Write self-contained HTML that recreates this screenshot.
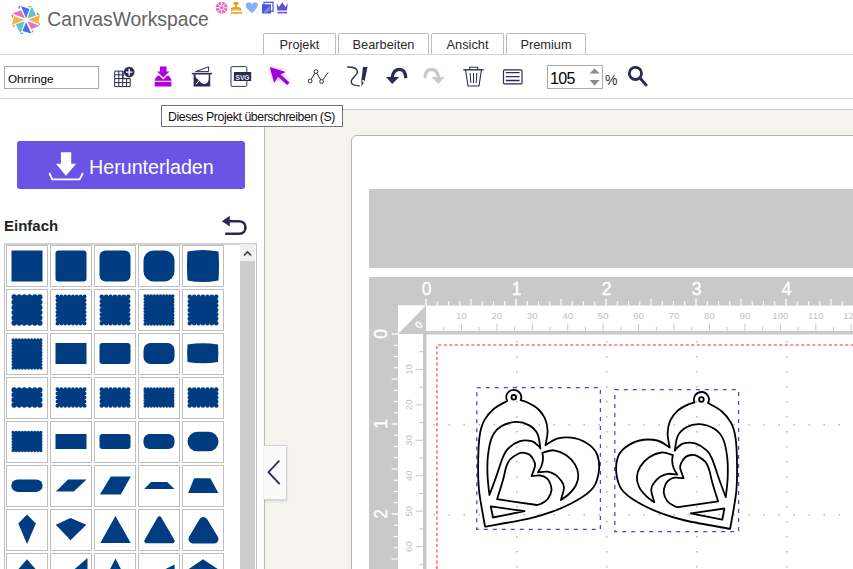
<!DOCTYPE html><html><head><meta charset="utf-8"><style>
*{margin:0;padding:0;box-sizing:border-box}
html,body{width:853px;height:569px;overflow:hidden;background:#fff;font-family:"Liberation Sans",sans-serif;position:relative}
.a{position:absolute}
.tab{position:absolute;top:33px;height:21px;border:1px solid #bdbdbd;border-radius:2px 2px 0 0;border-bottom:none;background:#fff;font-size:12.8px;color:#2a2a2a;text-align:center;line-height:22px}
.cell{position:absolute;width:42px;height:42px;border:1px solid #bebebe;background:#fff}
.cell svg{position:absolute;left:-1px;top:-1px}
</style></head><body>
<svg class="a" style="left:0;top:0" width="50" height="40">
<polygon fill="#4f6ee8" points="20.9,6 29.6,9 26,18.3"/>
<polygon fill="#5cc4d8" points="31.7,6.3 36.1,15.6 27.2,18.6"/>
<polygon fill="#f5b345" points="40,15 38.2,23.7 28.1,19.5"/>
<polygon fill="#e274c4" points="39.4,25.8 31.4,29.3 27.2,21"/>
<polygon fill="#4f6ee8" points="31.4,33.5 22.4,31.1 26,22.2"/>
<polygon fill="#5cc4d8" points="20.6,33.5 15.8,24.3 24.5,21.3"/>
<polygon fill="#f5b345" points="11.9,24.9 14,15.9 24.2,20.1"/>
<polygon fill="#e274c4" points="12.2,13.5 20.9,10.2 25.1,18.6"/>
<polygon fill="#3a4fc0" points="18.3,6.6 20.2,6.3 18.9,9.4"/>
<polygon fill="#3a9fb0" points="28,6.1 30.8,5.9 29.8,7.8"/>
<polygon fill="#e08a30" points="36.6,12.2 39.8,14.2 37.2,15.2"/>
<polygon fill="#b04ca0" points="38.6,21.9 40.2,24.9 38.7,24.4"/>
<polygon fill="#3a4fc0" points="31.6,33.2 33.6,30.4 32.4,30.8"/>
<polygon fill="#3a9fb0" points="20.3,33.9 23.1,32 22.7,33.9"/>
<polygon fill="#e08a30" points="12.4,25.4 15.4,25.2 14.1,27.6"/>
<polygon fill="#b04ca0" points="11.5,15.2 13.3,14.5 12.5,18.2"/>
</svg>
<div class="a" style="left:47.3px;top:9.2px;font-size:19.3px;color:#636363;letter-spacing:0px;white-space:nowrap">CanvasWorkspace</div>
<svg class="a" style="left:212px;top:0" width="80" height="16">
<g transform="translate(9.7,7.7)"><circle r="6" fill="#f068c4"/>
<g stroke="#fff" stroke-width="0.9" fill="none"><circle r="2.2"/><path d="M0,-6V-2.2M0,6V2.2M-6,0H-2.2M6,0H2.2M-4.2,-4.2L-1.6,-1.6M4.2,4.2L1.6,1.6M-4.2,4.2L-1.6,1.6M4.2,-4.2L1.6,-1.6"/></g></g>
<g fill="#e8a020"><rect x="21.5" y="2" width="5" height="3" rx="1"/><rect x="23" y="4.5" width="2" height="3"/><path d="M19,8 L21.5,7 H26.5 L29,8 V11 H19Z"/><rect x="19" y="12" width="11" height="1.6"/></g>
<g fill="none" stroke="#fff" stroke-width="0.8"><path d="M20.5,10.2H27.5"/></g>
<path d="M39.9,13 C36,10 33.8,8 33.8,5.3 C33.8,3.3 35.3,2.3 36.8,2.3 C38.2,2.3 39.3,3.2 39.9,4.3 C40.5,3.2 41.6,2.3 43,2.3 C44.5,2.3 45.9,3.3 45.9,5.3 C45.9,8 43.8,10 39.9,13Z" fill="#82b2f2"/>
<path d="M43,12 L45.5,6" stroke="#fff" stroke-width="0.7" opacity="0.7"/>
<rect x="52" y="2.3" width="9" height="9" fill="none" stroke="#4050e0" stroke-width="1.2"/>
<rect x="50" y="4.3" width="9" height="9.2" fill="#4a56e4"/>
<path d="M52,12.5 L58,6.5 M54,12.5 L58,8.5" stroke="#fff" stroke-width="0.6"/>
<path d="M64.5,3 L66.8,7 L70.2,2.5 L73.6,7 L75.8,3 L75,10.5 H65.4Z" fill="#6050d8"/>
<rect x="65.4" y="11.8" width="9.6" height="1.6" fill="#6050d8"/>
</svg>
<div class="a" style="left:0;top:54px;width:853px;height:1px;background:#d4d4d4"></div>
<div class="tab" style="left:263px;width:73px">Projekt</div>
<div class="tab" style="left:338px;width:91px">Bearbeiten</div>
<div class="tab" style="left:431px;width:73px">Ansicht</div>
<div class="tab" style="left:506px;width:80px">Premium</div>
<div class="a" style="left:4px;top:66px;width:95px;height:23px;border:1px solid #a9a9a9;font-size:11.7px;color:#000;padding-left:3px;line-height:24px">Ohrringe</div>
<div class="a" style="left:0;top:98px;width:853px;height:1px;background:#d0d0d0"></div>
<svg class="a" style="left:100px;top:56px" width="560" height="40">
<g transform="translate(-100,-56)">
<!-- grid plus -->
<g fill="none" stroke="#2b2b52" stroke-width="1">
<path d="M114.7,71.1 H123.2 V78.6 H130.2 V86.6 H114.7Z M118.8,71.1 V86.6 M122.7,71.1 V86.6 M126.6,78.6 V86.6 M114.7,74.8 H123 M114.7,78.6 H130 M114.7,82.6 H130"/>
</g>
<circle cx="129.2" cy="72.1" r="5.3" fill="#2b2b52"/>
<path d="M129.2,68.8 V75.4 M125.9,72.1 H132.5" stroke="#fff" stroke-width="1.4"/>
<!-- download tray magenta -->
<g fill="#b000e0">
<path d="M160,66.5 H166.5 V71.5 H169.5 L163.25,77.5 L157,71.5 H160Z"/>
<path d="M154.7,79.5 L157.5,75.8 H159.5 L163.25,79.5 L167,75.8 H169 L171.4,79.5 V86.6 H154.7Z"/>
</g>
<path d="M154.7,81.3 H171.4" stroke="#fff" stroke-width="1"/>
<!-- scan icon -->
<path d="M195.5,71.6 L208.6,66.8 V71.6Z" fill="none" stroke="#2b2b52" stroke-width="1"/>
<path d="M191.8,73.6 H212" stroke="#2b2b52" stroke-width="1.5"/>
<path d="M193.6,74.3 H210.2 V86.5 H193.6Z M195.5,74.5 H208.7 V79 C208.7,82 206.5,84 204,84 C202.5,84 201.2,83 200.2,81.8 L195.8,77.5Z" fill="#2b2b52" fill-rule="evenodd"/><path d="M196.2,84.2 L199.8,79.8" stroke="#fff" stroke-width="1"/>
<!-- svg file -->
<rect x="231" y="66.6" width="15.8" height="19.8" rx="1" fill="none" stroke="#2b2b52" stroke-width="0.95"/>
<rect x="233.9" y="72" width="17.3" height="9" fill="#2b2b52"/>
<text x="242.5" y="79.6" font-size="8" font-weight="bold" textLength="14" lengthAdjust="spacingAndGlyphs" fill="#e8e8f0" text-anchor="middle" font-family="Liberation Sans">SVG</text>
<!-- arrow magenta -->
<defs><filter id="gl" x="-50%" y="-50%" width="200%" height="200%"><feGaussianBlur stdDeviation="2"/></filter></defs>
<g filter="url(#gl)" opacity="0.35"><path d="M269.7,67 L285.7,71.9 L280.5,74.5 L289.5,82.6 L287.2,85 L278,76.8 L274.2,83Z" fill="#b000e8"/></g>
<path d="M269.7,67 L285.7,71.9 L280.5,74.5 L289.5,82.6 L287.2,85 L278,76.8 L274.2,83Z" fill="#a000e0"/>
<!-- node icon -->
<path d="M310.1,81 L315.9,71.6 L321.6,81.5 L328.1,72.5" fill="none" stroke="#2b2b52" stroke-width="1"/>
<g fill="#fff" stroke="#2b2b52" stroke-width="1"><circle cx="310.1" cy="81" r="1.9"/><circle cx="315.9" cy="71.6" r="1.9"/><circle cx="321.6" cy="81.5" r="1.9"/></g>
<!-- pen S -->
<path d="M347.3,67 C352,67 357.4,68 357.4,71.8 C357.4,75.5 351.2,78 351.2,81.8 C351.2,85.2 355,85.8 359.7,85.8" fill="none" stroke="#2b2b52" stroke-width="1.3"/>
<path d="M363,67 H367.5 L364.8,80.2 L361.6,86.4 L361.4,80Z" fill="#2b2b52"/>
<path d="M362,80.3 L364.5,80.3 L363,83Z" fill="#fff"/>
<!-- undo -->
<path d="M392.2,77.2 C393,72 396,69.3 399.5,69.3 C403,69.3 405.5,72.5 405.8,78.2" fill="none" stroke="#2b2b52" stroke-width="3.2"/>
<path d="M386.1,77 H399.2 L392.2,84Z" fill="#2b2b52"/>
<!-- redo -->
<g transform="translate(830.7,0) scale(-1,1)">
<path d="M392.2,77.2 C393,72 396,69.3 399.5,69.3 C403,69.3 405.5,72.5 405.8,78.2" fill="none" stroke="#c6cad2" stroke-width="3.2"/>
<path d="M386.1,77 H399.2 L392.2,84Z" fill="#c6cad2"/>
</g>
<!-- trash -->
<path d="M463.3,69.8 H483.6" stroke="#2b2b52" stroke-width="1.4"/>
<path d="M469.8,69.5 V67.2 H477.7 V69.5" fill="none" stroke="#2b2b52" stroke-width="1.1"/>
<path d="M465.6,70 L468,86 H479 L481.4,70" fill="none" stroke="#2b2b52" stroke-width="1.1"/>
<path d="M470.2,73 L470.8,83 M473.5,73 V83 M476.8,73 L476.2,83" stroke="#2b2b52" stroke-width="1"/>
<!-- list -->
<rect x="503.5" y="69.8" width="18.5" height="14" rx="1" fill="none" stroke="#2b2b52" stroke-width="1.2"/>
<path d="M505.8,72.6 H519.6 M505.8,76.6 H519.6 M505.8,80.5 H519.6" stroke="#2b2b52" stroke-width="1.3"/>
<!-- magnifier -->
<circle cx="635.4" cy="73.4" r="6.1" fill="none" stroke="#2b2b52" stroke-width="2.8"/>
<path d="M640,78 L646.8,85.8" stroke="#2b2b52" stroke-width="2.8"/>
</g></svg>
<div class="a" style="left:547px;top:65px;width:56px;height:24px;border:1px solid #a9a9a9;background:#fff"></div>
<div class="a" style="left:550px;top:70px;font-size:16px;letter-spacing:-0.6px;color:#000;line-height:18px">105</div>
<svg class="a" style="left:588px;top:66px" width="14" height="22"><path d="M1.5,7.5 L6.6,2.5 L11.7,7.5Z M1.5,14 L6.6,19.5 L11.7,14Z" fill="#8a8a8a"/></svg>
<div class="a" style="left:605px;top:72px;font-size:14px;color:#333;line-height:16px">%</div>
<div class="a" style="left:264px;top:109px;width:1px;height:460px;background:#b8b8b8"></div>
<div class="a" style="left:17px;top:141px;width:228px;height:48px;background:#6b53e6;border-radius:3px"></div>
<svg class="a" style="left:45px;top:148px" width="45" height="36"><g transform="translate(-45,-148)">
<path d="M60.9,152.2 H71.2 V163.8 H76.1 L66,175.8 L55.9,163.8 H60.9Z" fill="#fff"/>
<path d="M49.3,173 L52.3,179.3 H79.6 L82.9,173" fill="none" stroke="#fff" stroke-width="1.8"/>
</g></svg>
<div class="a" style="left:89px;top:154.5px;font-size:19.7px;color:#fff;line-height:24px;white-space:nowrap">Herunterladen</div>
<div class="a" style="left:4px;top:217px;font-size:15px;font-weight:bold;color:#222;line-height:18px">Einfach</div>
<svg class="a" style="left:218px;top:212px" width="32" height="26"><g transform="translate(-218,-212)">
<path d="M228,221.2 H238.5 C243,221.2 245.5,224 245.5,227.5 C245.5,231 243,233.8 238.5,233.8 H225.2" fill="none" stroke="#2b2b52" stroke-width="2.6"/>
<path d="M221.9,221.2 L229.8,215.8 V226.6Z" fill="#2b2b52"/>
</g></svg>
<div class="a" style="left:4px;top:243px;width:253px;height:340px;border:1px solid #c0c0c0;border-top:2px solid #d2d2d2;background:#fff"></div>
<div class="a" style="left:240px;top:244px;width:15px;height:330px;background:#cdcdcd"></div>
<div class="a" style="left:240px;top:244px;width:15px;height:17px;background:#f0f0f0"></div>
<svg class="a" style="left:240px;top:244px" width="15" height="17"><path d="M4,11.5 L7.5,8 L11,11.5" fill="none" stroke="#404040" stroke-width="1.6"/></svg>
<div class="cell" style="left:6px;top:245px"><svg width="42" height="42"><rect x="5.5" y="5.5" width="31" height="31" rx="0" fill="#003c82"/></svg></div>
<div class="cell" style="left:50px;top:245px"><svg width="42" height="42"><rect x="5.5" y="5.5" width="31" height="31" rx="3" fill="#003c82"/></svg></div>
<div class="cell" style="left:94px;top:245px"><svg width="42" height="42"><rect x="5.5" y="5.5" width="31" height="31" rx="6" fill="#003c82"/></svg></div>
<div class="cell" style="left:138px;top:245px"><svg width="42" height="42"><rect x="5.5" y="5.5" width="31" height="31" rx="10" fill="#003c82"/></svg></div>
<div class="cell" style="left:182px;top:245px"><svg width="42" height="42"><path fill="#003c82" d="M5.5,6.5 Q21.0,3.5 36.5,6.5 Q37.5,21.0 36.5,35.5 Q21.0,38.5 5.5,35.5 Q4.5,21.0 5.5,6.5Z"/></svg></div>
<div class="cell" style="left:6px;top:289px"><svg width="42" height="42"><path fill="#003c82" d="M8.12,8.12h25.77v25.77h-25.77ZM5.50,8.12a2.62,2.62 0 1 1 5.23,0a2.62,2.62 0 1 1 -5.23,0M5.50,13.27a2.62,2.62 0 1 1 5.23,0a2.62,2.62 0 1 1 -5.23,0M5.50,18.42a2.62,2.62 0 1 1 5.23,0a2.62,2.62 0 1 1 -5.23,0M5.50,23.58a2.62,2.62 0 1 1 5.23,0a2.62,2.62 0 1 1 -5.23,0M5.50,28.73a2.62,2.62 0 1 1 5.23,0a2.62,2.62 0 1 1 -5.23,0M5.50,33.88a2.62,2.62 0 1 1 5.23,0a2.62,2.62 0 1 1 -5.23,0M10.65,8.12a2.62,2.62 0 1 1 5.23,0a2.62,2.62 0 1 1 -5.23,0M10.65,33.88a2.62,2.62 0 1 1 5.23,0a2.62,2.62 0 1 1 -5.23,0M15.80,8.12a2.62,2.62 0 1 1 5.23,0a2.62,2.62 0 1 1 -5.23,0M15.80,33.88a2.62,2.62 0 1 1 5.23,0a2.62,2.62 0 1 1 -5.23,0M20.96,8.12a2.62,2.62 0 1 1 5.23,0a2.62,2.62 0 1 1 -5.23,0M20.96,33.88a2.62,2.62 0 1 1 5.23,0a2.62,2.62 0 1 1 -5.23,0M26.11,8.12a2.62,2.62 0 1 1 5.23,0a2.62,2.62 0 1 1 -5.23,0M26.11,33.88a2.62,2.62 0 1 1 5.23,0a2.62,2.62 0 1 1 -5.23,0M31.26,8.12a2.62,2.62 0 1 1 5.23,0a2.62,2.62 0 1 1 -5.23,0M31.26,13.27a2.62,2.62 0 1 1 5.23,0a2.62,2.62 0 1 1 -5.23,0M31.26,18.42a2.62,2.62 0 1 1 5.23,0a2.62,2.62 0 1 1 -5.23,0M31.26,23.58a2.62,2.62 0 1 1 5.23,0a2.62,2.62 0 1 1 -5.23,0M31.26,28.73a2.62,2.62 0 1 1 5.23,0a2.62,2.62 0 1 1 -5.23,0M31.26,33.88a2.62,2.62 0 1 1 5.23,0a2.62,2.62 0 1 1 -5.23,0"/></svg></div>
<div class="cell" style="left:50px;top:289px"><svg width="42" height="42"><path fill="#003c82" d="M7.46,7.46h27.07v27.07h-27.07ZM5.50,7.46a1.96,1.96 0 1 1 3.93,0a1.96,1.96 0 1 1 -3.93,0M5.50,11.33a1.96,1.96 0 1 1 3.93,0a1.96,1.96 0 1 1 -3.93,0M5.50,15.20a1.96,1.96 0 1 1 3.93,0a1.96,1.96 0 1 1 -3.93,0M5.50,19.07a1.96,1.96 0 1 1 3.93,0a1.96,1.96 0 1 1 -3.93,0M5.50,22.93a1.96,1.96 0 1 1 3.93,0a1.96,1.96 0 1 1 -3.93,0M5.50,26.80a1.96,1.96 0 1 1 3.93,0a1.96,1.96 0 1 1 -3.93,0M5.50,30.67a1.96,1.96 0 1 1 3.93,0a1.96,1.96 0 1 1 -3.93,0M5.50,34.54a1.96,1.96 0 1 1 3.93,0a1.96,1.96 0 1 1 -3.93,0M9.37,7.46a1.96,1.96 0 1 1 3.93,0a1.96,1.96 0 1 1 -3.93,0M9.37,34.54a1.96,1.96 0 1 1 3.93,0a1.96,1.96 0 1 1 -3.93,0M13.24,7.46a1.96,1.96 0 1 1 3.93,0a1.96,1.96 0 1 1 -3.93,0M13.24,34.54a1.96,1.96 0 1 1 3.93,0a1.96,1.96 0 1 1 -3.93,0M17.11,7.46a1.96,1.96 0 1 1 3.93,0a1.96,1.96 0 1 1 -3.93,0M17.11,34.54a1.96,1.96 0 1 1 3.93,0a1.96,1.96 0 1 1 -3.93,0M20.97,7.46a1.96,1.96 0 1 1 3.93,0a1.96,1.96 0 1 1 -3.93,0M20.97,34.54a1.96,1.96 0 1 1 3.93,0a1.96,1.96 0 1 1 -3.93,0M24.84,7.46a1.96,1.96 0 1 1 3.93,0a1.96,1.96 0 1 1 -3.93,0M24.84,34.54a1.96,1.96 0 1 1 3.93,0a1.96,1.96 0 1 1 -3.93,0M28.71,7.46a1.96,1.96 0 1 1 3.93,0a1.96,1.96 0 1 1 -3.93,0M28.71,34.54a1.96,1.96 0 1 1 3.93,0a1.96,1.96 0 1 1 -3.93,0M32.58,7.46a1.96,1.96 0 1 1 3.93,0a1.96,1.96 0 1 1 -3.93,0M32.58,11.33a1.96,1.96 0 1 1 3.93,0a1.96,1.96 0 1 1 -3.93,0M32.58,15.20a1.96,1.96 0 1 1 3.93,0a1.96,1.96 0 1 1 -3.93,0M32.58,19.07a1.96,1.96 0 1 1 3.93,0a1.96,1.96 0 1 1 -3.93,0M32.58,22.93a1.96,1.96 0 1 1 3.93,0a1.96,1.96 0 1 1 -3.93,0M32.58,26.80a1.96,1.96 0 1 1 3.93,0a1.96,1.96 0 1 1 -3.93,0M32.58,30.67a1.96,1.96 0 1 1 3.93,0a1.96,1.96 0 1 1 -3.93,0M32.58,34.54a1.96,1.96 0 1 1 3.93,0a1.96,1.96 0 1 1 -3.93,0"/></svg></div>
<div class="cell" style="left:94px;top:289px"><svg width="42" height="42"><path fill="#003c82" d="M7.76,7.76h26.47v26.47h-26.47ZM5.50,7.76a2.26,2.26 0 1 1 4.53,0a2.26,2.26 0 1 1 -4.53,0M5.50,12.18a2.26,2.26 0 1 1 4.53,0a2.26,2.26 0 1 1 -4.53,0M5.50,16.59a2.26,2.26 0 1 1 4.53,0a2.26,2.26 0 1 1 -4.53,0M5.50,21.00a2.26,2.26 0 1 1 4.53,0a2.26,2.26 0 1 1 -4.53,0M5.50,25.41a2.26,2.26 0 1 1 4.53,0a2.26,2.26 0 1 1 -4.53,0M5.50,29.82a2.26,2.26 0 1 1 4.53,0a2.26,2.26 0 1 1 -4.53,0M5.50,34.24a2.26,2.26 0 1 1 4.53,0a2.26,2.26 0 1 1 -4.53,0M9.92,7.76a2.26,2.26 0 1 1 4.53,0a2.26,2.26 0 1 1 -4.53,0M9.92,34.24a2.26,2.26 0 1 1 4.53,0a2.26,2.26 0 1 1 -4.53,0M14.33,7.76a2.26,2.26 0 1 1 4.53,0a2.26,2.26 0 1 1 -4.53,0M14.33,34.24a2.26,2.26 0 1 1 4.53,0a2.26,2.26 0 1 1 -4.53,0M18.74,7.76a2.26,2.26 0 1 1 4.53,0a2.26,2.26 0 1 1 -4.53,0M18.74,34.24a2.26,2.26 0 1 1 4.53,0a2.26,2.26 0 1 1 -4.53,0M23.15,7.76a2.26,2.26 0 1 1 4.53,0a2.26,2.26 0 1 1 -4.53,0M23.15,34.24a2.26,2.26 0 1 1 4.53,0a2.26,2.26 0 1 1 -4.53,0M27.56,7.76a2.26,2.26 0 1 1 4.53,0a2.26,2.26 0 1 1 -4.53,0M27.56,34.24a2.26,2.26 0 1 1 4.53,0a2.26,2.26 0 1 1 -4.53,0M31.98,7.76a2.26,2.26 0 1 1 4.53,0a2.26,2.26 0 1 1 -4.53,0M31.98,12.18a2.26,2.26 0 1 1 4.53,0a2.26,2.26 0 1 1 -4.53,0M31.98,16.59a2.26,2.26 0 1 1 4.53,0a2.26,2.26 0 1 1 -4.53,0M31.98,21.00a2.26,2.26 0 1 1 4.53,0a2.26,2.26 0 1 1 -4.53,0M31.98,25.41a2.26,2.26 0 1 1 4.53,0a2.26,2.26 0 1 1 -4.53,0M31.98,29.82a2.26,2.26 0 1 1 4.53,0a2.26,2.26 0 1 1 -4.53,0M31.98,34.24a2.26,2.26 0 1 1 4.53,0a2.26,2.26 0 1 1 -4.53,0"/></svg></div>
<div class="cell" style="left:138px;top:289px"><svg width="42" height="42"><path fill="#003c82" d="M7.09,7.09h27.83v27.83h-27.83ZM5.50,7.09a1.59,1.59 0 1 1 3.17,0a1.59,1.59 0 1 1 -3.17,0M5.50,10.18a1.59,1.59 0 1 1 3.17,0a1.59,1.59 0 1 1 -3.17,0M5.50,13.27a1.59,1.59 0 1 1 3.17,0a1.59,1.59 0 1 1 -3.17,0M5.50,16.36a1.59,1.59 0 1 1 3.17,0a1.59,1.59 0 1 1 -3.17,0M5.50,19.45a1.59,1.59 0 1 1 3.17,0a1.59,1.59 0 1 1 -3.17,0M5.50,22.55a1.59,1.59 0 1 1 3.17,0a1.59,1.59 0 1 1 -3.17,0M5.50,25.64a1.59,1.59 0 1 1 3.17,0a1.59,1.59 0 1 1 -3.17,0M5.50,28.73a1.59,1.59 0 1 1 3.17,0a1.59,1.59 0 1 1 -3.17,0M5.50,31.82a1.59,1.59 0 1 1 3.17,0a1.59,1.59 0 1 1 -3.17,0M5.50,34.91a1.59,1.59 0 1 1 3.17,0a1.59,1.59 0 1 1 -3.17,0M8.59,7.09a1.59,1.59 0 1 1 3.17,0a1.59,1.59 0 1 1 -3.17,0M8.59,34.91a1.59,1.59 0 1 1 3.17,0a1.59,1.59 0 1 1 -3.17,0M11.68,7.09a1.59,1.59 0 1 1 3.17,0a1.59,1.59 0 1 1 -3.17,0M11.68,34.91a1.59,1.59 0 1 1 3.17,0a1.59,1.59 0 1 1 -3.17,0M14.77,7.09a1.59,1.59 0 1 1 3.17,0a1.59,1.59 0 1 1 -3.17,0M14.77,34.91a1.59,1.59 0 1 1 3.17,0a1.59,1.59 0 1 1 -3.17,0M17.86,7.09a1.59,1.59 0 1 1 3.17,0a1.59,1.59 0 1 1 -3.17,0M17.86,34.91a1.59,1.59 0 1 1 3.17,0a1.59,1.59 0 1 1 -3.17,0M20.96,7.09a1.59,1.59 0 1 1 3.17,0a1.59,1.59 0 1 1 -3.17,0M20.96,34.91a1.59,1.59 0 1 1 3.17,0a1.59,1.59 0 1 1 -3.17,0M24.05,7.09a1.59,1.59 0 1 1 3.17,0a1.59,1.59 0 1 1 -3.17,0M24.05,34.91a1.59,1.59 0 1 1 3.17,0a1.59,1.59 0 1 1 -3.17,0M27.14,7.09a1.59,1.59 0 1 1 3.17,0a1.59,1.59 0 1 1 -3.17,0M27.14,34.91a1.59,1.59 0 1 1 3.17,0a1.59,1.59 0 1 1 -3.17,0M30.23,7.09a1.59,1.59 0 1 1 3.17,0a1.59,1.59 0 1 1 -3.17,0M30.23,34.91a1.59,1.59 0 1 1 3.17,0a1.59,1.59 0 1 1 -3.17,0M33.32,7.09a1.59,1.59 0 1 1 3.17,0a1.59,1.59 0 1 1 -3.17,0M33.32,10.18a1.59,1.59 0 1 1 3.17,0a1.59,1.59 0 1 1 -3.17,0M33.32,13.27a1.59,1.59 0 1 1 3.17,0a1.59,1.59 0 1 1 -3.17,0M33.32,16.36a1.59,1.59 0 1 1 3.17,0a1.59,1.59 0 1 1 -3.17,0M33.32,19.45a1.59,1.59 0 1 1 3.17,0a1.59,1.59 0 1 1 -3.17,0M33.32,22.55a1.59,1.59 0 1 1 3.17,0a1.59,1.59 0 1 1 -3.17,0M33.32,25.64a1.59,1.59 0 1 1 3.17,0a1.59,1.59 0 1 1 -3.17,0M33.32,28.73a1.59,1.59 0 1 1 3.17,0a1.59,1.59 0 1 1 -3.17,0M33.32,31.82a1.59,1.59 0 1 1 3.17,0a1.59,1.59 0 1 1 -3.17,0M33.32,34.91a1.59,1.59 0 1 1 3.17,0a1.59,1.59 0 1 1 -3.17,0"/></svg></div>
<div class="cell" style="left:182px;top:289px"><svg width="42" height="42"><path fill="#003c82" d="M7.74,7.74h26.51v26.51h-26.51ZM5.50,7.74a2.24,2.24 0 1 1 4.49,0a2.24,2.24 0 1 1 -4.49,0M5.50,12.16a2.24,2.24 0 1 1 4.49,0a2.24,2.24 0 1 1 -4.49,0M5.50,16.58a2.24,2.24 0 1 1 4.49,0a2.24,2.24 0 1 1 -4.49,0M5.50,21.00a2.24,2.24 0 1 1 4.49,0a2.24,2.24 0 1 1 -4.49,0M5.50,25.42a2.24,2.24 0 1 1 4.49,0a2.24,2.24 0 1 1 -4.49,0M5.50,29.84a2.24,2.24 0 1 1 4.49,0a2.24,2.24 0 1 1 -4.49,0M5.50,34.26a2.24,2.24 0 1 1 4.49,0a2.24,2.24 0 1 1 -4.49,0M9.92,7.74a2.24,2.24 0 1 1 4.49,0a2.24,2.24 0 1 1 -4.49,0M9.92,34.26a2.24,2.24 0 1 1 4.49,0a2.24,2.24 0 1 1 -4.49,0M14.34,7.74a2.24,2.24 0 1 1 4.49,0a2.24,2.24 0 1 1 -4.49,0M14.34,34.26a2.24,2.24 0 1 1 4.49,0a2.24,2.24 0 1 1 -4.49,0M18.76,7.74a2.24,2.24 0 1 1 4.49,0a2.24,2.24 0 1 1 -4.49,0M18.76,34.26a2.24,2.24 0 1 1 4.49,0a2.24,2.24 0 1 1 -4.49,0M23.18,7.74a2.24,2.24 0 1 1 4.49,0a2.24,2.24 0 1 1 -4.49,0M23.18,34.26a2.24,2.24 0 1 1 4.49,0a2.24,2.24 0 1 1 -4.49,0M27.60,7.74a2.24,2.24 0 1 1 4.49,0a2.24,2.24 0 1 1 -4.49,0M27.60,34.26a2.24,2.24 0 1 1 4.49,0a2.24,2.24 0 1 1 -4.49,0M32.02,7.74a2.24,2.24 0 1 1 4.49,0a2.24,2.24 0 1 1 -4.49,0M32.02,12.16a2.24,2.24 0 1 1 4.49,0a2.24,2.24 0 1 1 -4.49,0M32.02,16.58a2.24,2.24 0 1 1 4.49,0a2.24,2.24 0 1 1 -4.49,0M32.02,21.00a2.24,2.24 0 1 1 4.49,0a2.24,2.24 0 1 1 -4.49,0M32.02,25.42a2.24,2.24 0 1 1 4.49,0a2.24,2.24 0 1 1 -4.49,0M32.02,29.84a2.24,2.24 0 1 1 4.49,0a2.24,2.24 0 1 1 -4.49,0M32.02,34.26a2.24,2.24 0 1 1 4.49,0a2.24,2.24 0 1 1 -4.49,0"/></svg></div>
<div class="cell" style="left:6px;top:333px"><svg width="42" height="42"><path fill="#003c82" d="M7.09,7.09h27.83v27.83h-27.83ZM5.50,7.09a1.59,1.59 0 1 1 3.17,0a1.59,1.59 0 1 1 -3.17,0M5.50,10.18a1.59,1.59 0 1 1 3.17,0a1.59,1.59 0 1 1 -3.17,0M5.50,13.27a1.59,1.59 0 1 1 3.17,0a1.59,1.59 0 1 1 -3.17,0M5.50,16.36a1.59,1.59 0 1 1 3.17,0a1.59,1.59 0 1 1 -3.17,0M5.50,19.45a1.59,1.59 0 1 1 3.17,0a1.59,1.59 0 1 1 -3.17,0M5.50,22.55a1.59,1.59 0 1 1 3.17,0a1.59,1.59 0 1 1 -3.17,0M5.50,25.64a1.59,1.59 0 1 1 3.17,0a1.59,1.59 0 1 1 -3.17,0M5.50,28.73a1.59,1.59 0 1 1 3.17,0a1.59,1.59 0 1 1 -3.17,0M5.50,31.82a1.59,1.59 0 1 1 3.17,0a1.59,1.59 0 1 1 -3.17,0M5.50,34.91a1.59,1.59 0 1 1 3.17,0a1.59,1.59 0 1 1 -3.17,0M8.59,7.09a1.59,1.59 0 1 1 3.17,0a1.59,1.59 0 1 1 -3.17,0M8.59,34.91a1.59,1.59 0 1 1 3.17,0a1.59,1.59 0 1 1 -3.17,0M11.68,7.09a1.59,1.59 0 1 1 3.17,0a1.59,1.59 0 1 1 -3.17,0M11.68,34.91a1.59,1.59 0 1 1 3.17,0a1.59,1.59 0 1 1 -3.17,0M14.77,7.09a1.59,1.59 0 1 1 3.17,0a1.59,1.59 0 1 1 -3.17,0M14.77,34.91a1.59,1.59 0 1 1 3.17,0a1.59,1.59 0 1 1 -3.17,0M17.86,7.09a1.59,1.59 0 1 1 3.17,0a1.59,1.59 0 1 1 -3.17,0M17.86,34.91a1.59,1.59 0 1 1 3.17,0a1.59,1.59 0 1 1 -3.17,0M20.96,7.09a1.59,1.59 0 1 1 3.17,0a1.59,1.59 0 1 1 -3.17,0M20.96,34.91a1.59,1.59 0 1 1 3.17,0a1.59,1.59 0 1 1 -3.17,0M24.05,7.09a1.59,1.59 0 1 1 3.17,0a1.59,1.59 0 1 1 -3.17,0M24.05,34.91a1.59,1.59 0 1 1 3.17,0a1.59,1.59 0 1 1 -3.17,0M27.14,7.09a1.59,1.59 0 1 1 3.17,0a1.59,1.59 0 1 1 -3.17,0M27.14,34.91a1.59,1.59 0 1 1 3.17,0a1.59,1.59 0 1 1 -3.17,0M30.23,7.09a1.59,1.59 0 1 1 3.17,0a1.59,1.59 0 1 1 -3.17,0M30.23,34.91a1.59,1.59 0 1 1 3.17,0a1.59,1.59 0 1 1 -3.17,0M33.32,7.09a1.59,1.59 0 1 1 3.17,0a1.59,1.59 0 1 1 -3.17,0M33.32,10.18a1.59,1.59 0 1 1 3.17,0a1.59,1.59 0 1 1 -3.17,0M33.32,13.27a1.59,1.59 0 1 1 3.17,0a1.59,1.59 0 1 1 -3.17,0M33.32,16.36a1.59,1.59 0 1 1 3.17,0a1.59,1.59 0 1 1 -3.17,0M33.32,19.45a1.59,1.59 0 1 1 3.17,0a1.59,1.59 0 1 1 -3.17,0M33.32,22.55a1.59,1.59 0 1 1 3.17,0a1.59,1.59 0 1 1 -3.17,0M33.32,25.64a1.59,1.59 0 1 1 3.17,0a1.59,1.59 0 1 1 -3.17,0M33.32,28.73a1.59,1.59 0 1 1 3.17,0a1.59,1.59 0 1 1 -3.17,0M33.32,31.82a1.59,1.59 0 1 1 3.17,0a1.59,1.59 0 1 1 -3.17,0M33.32,34.91a1.59,1.59 0 1 1 3.17,0a1.59,1.59 0 1 1 -3.17,0"/></svg></div>
<div class="cell" style="left:50px;top:333px"><svg width="42" height="42"><rect x="5.5" y="10" width="31" height="21" rx="0" fill="#003c82"/></svg></div>
<div class="cell" style="left:94px;top:333px"><svg width="42" height="42"><rect x="5.5" y="10" width="31" height="21" rx="3" fill="#003c82"/></svg></div>
<div class="cell" style="left:138px;top:333px"><svg width="42" height="42"><rect x="5.5" y="10" width="31" height="21" rx="7" fill="#003c82"/></svg></div>
<div class="cell" style="left:182px;top:333px"><svg width="42" height="42"><path fill="#003c82" d="M5.5,11.5 Q20.75,9.0 36.0,11.5 Q36.75,20.25 36.0,29.0 Q20.75,31.5 5.5,29.0 Q4.75,20.25 5.5,11.5Z"/></svg></div>
<div class="cell" style="left:6px;top:377px"><svg width="42" height="42"><path fill="#003c82" d="M8.12,12.92h25.77v15.17h-25.77ZM5.50,12.92a2.62,2.62 0 1 1 5.23,0a2.62,2.62 0 1 1 -5.23,0M5.50,17.97a2.62,2.62 0 1 1 5.23,0a2.62,2.62 0 1 1 -5.23,0M5.50,23.03a2.62,2.62 0 1 1 5.23,0a2.62,2.62 0 1 1 -5.23,0M5.50,28.08a2.62,2.62 0 1 1 5.23,0a2.62,2.62 0 1 1 -5.23,0M10.65,12.92a2.62,2.62 0 1 1 5.23,0a2.62,2.62 0 1 1 -5.23,0M10.65,28.08a2.62,2.62 0 1 1 5.23,0a2.62,2.62 0 1 1 -5.23,0M15.80,12.92a2.62,2.62 0 1 1 5.23,0a2.62,2.62 0 1 1 -5.23,0M15.80,28.08a2.62,2.62 0 1 1 5.23,0a2.62,2.62 0 1 1 -5.23,0M20.96,12.92a2.62,2.62 0 1 1 5.23,0a2.62,2.62 0 1 1 -5.23,0M20.96,28.08a2.62,2.62 0 1 1 5.23,0a2.62,2.62 0 1 1 -5.23,0M26.11,12.92a2.62,2.62 0 1 1 5.23,0a2.62,2.62 0 1 1 -5.23,0M26.11,28.08a2.62,2.62 0 1 1 5.23,0a2.62,2.62 0 1 1 -5.23,0M31.26,12.92a2.62,2.62 0 1 1 5.23,0a2.62,2.62 0 1 1 -5.23,0M31.26,17.97a2.62,2.62 0 1 1 5.23,0a2.62,2.62 0 1 1 -5.23,0M31.26,23.03a2.62,2.62 0 1 1 5.23,0a2.62,2.62 0 1 1 -5.23,0M31.26,28.08a2.62,2.62 0 1 1 5.23,0a2.62,2.62 0 1 1 -5.23,0"/></svg></div>
<div class="cell" style="left:50px;top:377px"><svg width="42" height="42"><path fill="#003c82" d="M7.46,12.26h27.07v16.47h-27.07ZM5.50,12.26a1.96,1.96 0 1 1 3.93,0a1.96,1.96 0 1 1 -3.93,0M5.50,16.38a1.96,1.96 0 1 1 3.93,0a1.96,1.96 0 1 1 -3.93,0M5.50,20.50a1.96,1.96 0 1 1 3.93,0a1.96,1.96 0 1 1 -3.93,0M5.50,24.62a1.96,1.96 0 1 1 3.93,0a1.96,1.96 0 1 1 -3.93,0M5.50,28.74a1.96,1.96 0 1 1 3.93,0a1.96,1.96 0 1 1 -3.93,0M9.37,12.26a1.96,1.96 0 1 1 3.93,0a1.96,1.96 0 1 1 -3.93,0M9.37,28.74a1.96,1.96 0 1 1 3.93,0a1.96,1.96 0 1 1 -3.93,0M13.24,12.26a1.96,1.96 0 1 1 3.93,0a1.96,1.96 0 1 1 -3.93,0M13.24,28.74a1.96,1.96 0 1 1 3.93,0a1.96,1.96 0 1 1 -3.93,0M17.11,12.26a1.96,1.96 0 1 1 3.93,0a1.96,1.96 0 1 1 -3.93,0M17.11,28.74a1.96,1.96 0 1 1 3.93,0a1.96,1.96 0 1 1 -3.93,0M20.97,12.26a1.96,1.96 0 1 1 3.93,0a1.96,1.96 0 1 1 -3.93,0M20.97,28.74a1.96,1.96 0 1 1 3.93,0a1.96,1.96 0 1 1 -3.93,0M24.84,12.26a1.96,1.96 0 1 1 3.93,0a1.96,1.96 0 1 1 -3.93,0M24.84,28.74a1.96,1.96 0 1 1 3.93,0a1.96,1.96 0 1 1 -3.93,0M28.71,12.26a1.96,1.96 0 1 1 3.93,0a1.96,1.96 0 1 1 -3.93,0M28.71,28.74a1.96,1.96 0 1 1 3.93,0a1.96,1.96 0 1 1 -3.93,0M32.58,12.26a1.96,1.96 0 1 1 3.93,0a1.96,1.96 0 1 1 -3.93,0M32.58,16.38a1.96,1.96 0 1 1 3.93,0a1.96,1.96 0 1 1 -3.93,0M32.58,20.50a1.96,1.96 0 1 1 3.93,0a1.96,1.96 0 1 1 -3.93,0M32.58,24.62a1.96,1.96 0 1 1 3.93,0a1.96,1.96 0 1 1 -3.93,0M32.58,28.74a1.96,1.96 0 1 1 3.93,0a1.96,1.96 0 1 1 -3.93,0"/></svg></div>
<div class="cell" style="left:94px;top:377px"><svg width="42" height="42"><path fill="#003c82" d="M7.76,12.56h26.47v15.87h-26.47ZM5.50,12.56a2.26,2.26 0 1 1 4.53,0a2.26,2.26 0 1 1 -4.53,0M5.50,16.53a2.26,2.26 0 1 1 4.53,0a2.26,2.26 0 1 1 -4.53,0M5.50,20.50a2.26,2.26 0 1 1 4.53,0a2.26,2.26 0 1 1 -4.53,0M5.50,24.47a2.26,2.26 0 1 1 4.53,0a2.26,2.26 0 1 1 -4.53,0M5.50,28.44a2.26,2.26 0 1 1 4.53,0a2.26,2.26 0 1 1 -4.53,0M9.92,12.56a2.26,2.26 0 1 1 4.53,0a2.26,2.26 0 1 1 -4.53,0M9.92,28.44a2.26,2.26 0 1 1 4.53,0a2.26,2.26 0 1 1 -4.53,0M14.33,12.56a2.26,2.26 0 1 1 4.53,0a2.26,2.26 0 1 1 -4.53,0M14.33,28.44a2.26,2.26 0 1 1 4.53,0a2.26,2.26 0 1 1 -4.53,0M18.74,12.56a2.26,2.26 0 1 1 4.53,0a2.26,2.26 0 1 1 -4.53,0M18.74,28.44a2.26,2.26 0 1 1 4.53,0a2.26,2.26 0 1 1 -4.53,0M23.15,12.56a2.26,2.26 0 1 1 4.53,0a2.26,2.26 0 1 1 -4.53,0M23.15,28.44a2.26,2.26 0 1 1 4.53,0a2.26,2.26 0 1 1 -4.53,0M27.56,12.56a2.26,2.26 0 1 1 4.53,0a2.26,2.26 0 1 1 -4.53,0M27.56,28.44a2.26,2.26 0 1 1 4.53,0a2.26,2.26 0 1 1 -4.53,0M31.98,12.56a2.26,2.26 0 1 1 4.53,0a2.26,2.26 0 1 1 -4.53,0M31.98,16.53a2.26,2.26 0 1 1 4.53,0a2.26,2.26 0 1 1 -4.53,0M31.98,20.50a2.26,2.26 0 1 1 4.53,0a2.26,2.26 0 1 1 -4.53,0M31.98,24.47a2.26,2.26 0 1 1 4.53,0a2.26,2.26 0 1 1 -4.53,0M31.98,28.44a2.26,2.26 0 1 1 4.53,0a2.26,2.26 0 1 1 -4.53,0"/></svg></div>
<div class="cell" style="left:138px;top:377px"><svg width="42" height="42"><path fill="#003c82" d="M7.09,11.89h27.83v17.23h-27.83ZM5.50,11.89a1.59,1.59 0 1 1 3.17,0a1.59,1.59 0 1 1 -3.17,0M5.50,14.76a1.59,1.59 0 1 1 3.17,0a1.59,1.59 0 1 1 -3.17,0M5.50,17.63a1.59,1.59 0 1 1 3.17,0a1.59,1.59 0 1 1 -3.17,0M5.50,20.50a1.59,1.59 0 1 1 3.17,0a1.59,1.59 0 1 1 -3.17,0M5.50,23.37a1.59,1.59 0 1 1 3.17,0a1.59,1.59 0 1 1 -3.17,0M5.50,26.24a1.59,1.59 0 1 1 3.17,0a1.59,1.59 0 1 1 -3.17,0M5.50,29.11a1.59,1.59 0 1 1 3.17,0a1.59,1.59 0 1 1 -3.17,0M8.59,11.89a1.59,1.59 0 1 1 3.17,0a1.59,1.59 0 1 1 -3.17,0M8.59,29.11a1.59,1.59 0 1 1 3.17,0a1.59,1.59 0 1 1 -3.17,0M11.68,11.89a1.59,1.59 0 1 1 3.17,0a1.59,1.59 0 1 1 -3.17,0M11.68,29.11a1.59,1.59 0 1 1 3.17,0a1.59,1.59 0 1 1 -3.17,0M14.77,11.89a1.59,1.59 0 1 1 3.17,0a1.59,1.59 0 1 1 -3.17,0M14.77,29.11a1.59,1.59 0 1 1 3.17,0a1.59,1.59 0 1 1 -3.17,0M17.86,11.89a1.59,1.59 0 1 1 3.17,0a1.59,1.59 0 1 1 -3.17,0M17.86,29.11a1.59,1.59 0 1 1 3.17,0a1.59,1.59 0 1 1 -3.17,0M20.96,11.89a1.59,1.59 0 1 1 3.17,0a1.59,1.59 0 1 1 -3.17,0M20.96,29.11a1.59,1.59 0 1 1 3.17,0a1.59,1.59 0 1 1 -3.17,0M24.05,11.89a1.59,1.59 0 1 1 3.17,0a1.59,1.59 0 1 1 -3.17,0M24.05,29.11a1.59,1.59 0 1 1 3.17,0a1.59,1.59 0 1 1 -3.17,0M27.14,11.89a1.59,1.59 0 1 1 3.17,0a1.59,1.59 0 1 1 -3.17,0M27.14,29.11a1.59,1.59 0 1 1 3.17,0a1.59,1.59 0 1 1 -3.17,0M30.23,11.89a1.59,1.59 0 1 1 3.17,0a1.59,1.59 0 1 1 -3.17,0M30.23,29.11a1.59,1.59 0 1 1 3.17,0a1.59,1.59 0 1 1 -3.17,0M33.32,11.89a1.59,1.59 0 1 1 3.17,0a1.59,1.59 0 1 1 -3.17,0M33.32,14.76a1.59,1.59 0 1 1 3.17,0a1.59,1.59 0 1 1 -3.17,0M33.32,17.63a1.59,1.59 0 1 1 3.17,0a1.59,1.59 0 1 1 -3.17,0M33.32,20.50a1.59,1.59 0 1 1 3.17,0a1.59,1.59 0 1 1 -3.17,0M33.32,23.37a1.59,1.59 0 1 1 3.17,0a1.59,1.59 0 1 1 -3.17,0M33.32,26.24a1.59,1.59 0 1 1 3.17,0a1.59,1.59 0 1 1 -3.17,0M33.32,29.11a1.59,1.59 0 1 1 3.17,0a1.59,1.59 0 1 1 -3.17,0"/></svg></div>
<div class="cell" style="left:182px;top:377px"><svg width="42" height="42"><path fill="#003c82" d="M7.74,12.54h26.51v15.91h-26.51ZM5.50,12.54a2.24,2.24 0 1 1 4.49,0a2.24,2.24 0 1 1 -4.49,0M5.50,16.52a2.24,2.24 0 1 1 4.49,0a2.24,2.24 0 1 1 -4.49,0M5.50,20.50a2.24,2.24 0 1 1 4.49,0a2.24,2.24 0 1 1 -4.49,0M5.50,24.48a2.24,2.24 0 1 1 4.49,0a2.24,2.24 0 1 1 -4.49,0M5.50,28.46a2.24,2.24 0 1 1 4.49,0a2.24,2.24 0 1 1 -4.49,0M9.92,12.54a2.24,2.24 0 1 1 4.49,0a2.24,2.24 0 1 1 -4.49,0M9.92,28.46a2.24,2.24 0 1 1 4.49,0a2.24,2.24 0 1 1 -4.49,0M14.34,12.54a2.24,2.24 0 1 1 4.49,0a2.24,2.24 0 1 1 -4.49,0M14.34,28.46a2.24,2.24 0 1 1 4.49,0a2.24,2.24 0 1 1 -4.49,0M18.76,12.54a2.24,2.24 0 1 1 4.49,0a2.24,2.24 0 1 1 -4.49,0M18.76,28.46a2.24,2.24 0 1 1 4.49,0a2.24,2.24 0 1 1 -4.49,0M23.18,12.54a2.24,2.24 0 1 1 4.49,0a2.24,2.24 0 1 1 -4.49,0M23.18,28.46a2.24,2.24 0 1 1 4.49,0a2.24,2.24 0 1 1 -4.49,0M27.60,12.54a2.24,2.24 0 1 1 4.49,0a2.24,2.24 0 1 1 -4.49,0M27.60,28.46a2.24,2.24 0 1 1 4.49,0a2.24,2.24 0 1 1 -4.49,0M32.02,12.54a2.24,2.24 0 1 1 4.49,0a2.24,2.24 0 1 1 -4.49,0M32.02,16.52a2.24,2.24 0 1 1 4.49,0a2.24,2.24 0 1 1 -4.49,0M32.02,20.50a2.24,2.24 0 1 1 4.49,0a2.24,2.24 0 1 1 -4.49,0M32.02,24.48a2.24,2.24 0 1 1 4.49,0a2.24,2.24 0 1 1 -4.49,0M32.02,28.46a2.24,2.24 0 1 1 4.49,0a2.24,2.24 0 1 1 -4.49,0"/></svg></div>
<div class="cell" style="left:6px;top:421px"><svg width="42" height="42"><path fill="#003c82" d="M7.09,11.59h27.83v17.83h-27.83ZM5.50,11.59a1.59,1.59 0 1 1 3.17,0a1.59,1.59 0 1 1 -3.17,0M5.50,14.56a1.59,1.59 0 1 1 3.17,0a1.59,1.59 0 1 1 -3.17,0M5.50,17.53a1.59,1.59 0 1 1 3.17,0a1.59,1.59 0 1 1 -3.17,0M5.50,20.50a1.59,1.59 0 1 1 3.17,0a1.59,1.59 0 1 1 -3.17,0M5.50,23.47a1.59,1.59 0 1 1 3.17,0a1.59,1.59 0 1 1 -3.17,0M5.50,26.44a1.59,1.59 0 1 1 3.17,0a1.59,1.59 0 1 1 -3.17,0M5.50,29.41a1.59,1.59 0 1 1 3.17,0a1.59,1.59 0 1 1 -3.17,0M8.59,11.59a1.59,1.59 0 1 1 3.17,0a1.59,1.59 0 1 1 -3.17,0M8.59,29.41a1.59,1.59 0 1 1 3.17,0a1.59,1.59 0 1 1 -3.17,0M11.68,11.59a1.59,1.59 0 1 1 3.17,0a1.59,1.59 0 1 1 -3.17,0M11.68,29.41a1.59,1.59 0 1 1 3.17,0a1.59,1.59 0 1 1 -3.17,0M14.77,11.59a1.59,1.59 0 1 1 3.17,0a1.59,1.59 0 1 1 -3.17,0M14.77,29.41a1.59,1.59 0 1 1 3.17,0a1.59,1.59 0 1 1 -3.17,0M17.86,11.59a1.59,1.59 0 1 1 3.17,0a1.59,1.59 0 1 1 -3.17,0M17.86,29.41a1.59,1.59 0 1 1 3.17,0a1.59,1.59 0 1 1 -3.17,0M20.96,11.59a1.59,1.59 0 1 1 3.17,0a1.59,1.59 0 1 1 -3.17,0M20.96,29.41a1.59,1.59 0 1 1 3.17,0a1.59,1.59 0 1 1 -3.17,0M24.05,11.59a1.59,1.59 0 1 1 3.17,0a1.59,1.59 0 1 1 -3.17,0M24.05,29.41a1.59,1.59 0 1 1 3.17,0a1.59,1.59 0 1 1 -3.17,0M27.14,11.59a1.59,1.59 0 1 1 3.17,0a1.59,1.59 0 1 1 -3.17,0M27.14,29.41a1.59,1.59 0 1 1 3.17,0a1.59,1.59 0 1 1 -3.17,0M30.23,11.59a1.59,1.59 0 1 1 3.17,0a1.59,1.59 0 1 1 -3.17,0M30.23,29.41a1.59,1.59 0 1 1 3.17,0a1.59,1.59 0 1 1 -3.17,0M33.32,11.59a1.59,1.59 0 1 1 3.17,0a1.59,1.59 0 1 1 -3.17,0M33.32,14.56a1.59,1.59 0 1 1 3.17,0a1.59,1.59 0 1 1 -3.17,0M33.32,17.53a1.59,1.59 0 1 1 3.17,0a1.59,1.59 0 1 1 -3.17,0M33.32,20.50a1.59,1.59 0 1 1 3.17,0a1.59,1.59 0 1 1 -3.17,0M33.32,23.47a1.59,1.59 0 1 1 3.17,0a1.59,1.59 0 1 1 -3.17,0M33.32,26.44a1.59,1.59 0 1 1 3.17,0a1.59,1.59 0 1 1 -3.17,0M33.32,29.41a1.59,1.59 0 1 1 3.17,0a1.59,1.59 0 1 1 -3.17,0"/></svg></div>
<div class="cell" style="left:50px;top:421px"><svg width="42" height="42"><rect x="5.5" y="13" width="31" height="15" rx="0" fill="#003c82"/></svg></div>
<div class="cell" style="left:94px;top:421px"><svg width="42" height="42"><rect x="5.5" y="13" width="31" height="15" rx="3" fill="#003c82"/></svg></div>
<div class="cell" style="left:138px;top:421px"><svg width="42" height="42"><rect x="5.5" y="13" width="31" height="15" rx="6" fill="#003c82"/></svg></div>
<div class="cell" style="left:182px;top:421px"><svg width="42" height="42"><rect x="5.5" y="10.8" width="31" height="19.5" rx="9.7" fill="#003c82"/></svg></div>
<div class="cell" style="left:6px;top:465px"><svg width="42" height="42"><rect x="5.3" y="14.5" width="31.3" height="12.4" rx="6.2" fill="#003c82"/></svg></div>
<div class="cell" style="left:50px;top:465px"><svg width="42" height="42"><polygon fill="#003c82" points="5.9,26.5 18,14.4 36.5,14.4 23.8,26.5"/></svg></div>
<div class="cell" style="left:94px;top:465px"><svg width="42" height="42"><polygon fill="#003c82" points="5.9,29.6 16.8,11.4 36.8,11.4 26.8,29.6"/></svg></div>
<div class="cell" style="left:138px;top:465px"><svg width="42" height="42"><polygon fill="#003c82" points="6.2,24.1 13,17.1 29.2,17.1 36.4,24.1"/></svg></div>
<div class="cell" style="left:182px;top:465px"><svg width="42" height="42"><polygon fill="#003c82" points="6.2,27.9 12.1,13.3 28.3,13.3 36.4,27.9"/></svg></div>
<div class="cell" style="left:6px;top:509px"><svg width="42" height="42"><polygon fill="#003c82" points="21,5.5 12.3,14.4 21,35.1 29.9,14.4"/></svg></div>
<div class="cell" style="left:50px;top:509px"><svg width="42" height="42"><polygon fill="#003c82" points="5.8,15.7 20.6,9 36.3,15.7 20.6,31.3"/></svg></div>
<div class="cell" style="left:94px;top:509px"><svg width="42" height="42"><polygon fill="#003c82" points="21.4,7.1 6.3,34 36.8,34"/></svg></div>
<div class="cell" style="left:138px;top:509px"><svg width="42" height="42"><polygon fill="#003c82" stroke="#003c82" stroke-width="4.4" stroke-linejoin="round" points="21.4,9.5 8.5,32 34.5,32"/></svg></div>
<div class="cell" style="left:182px;top:509px"><svg width="42" height="42"><polygon fill="#003c82" stroke="#003c82" stroke-width="9.0" stroke-linejoin="round" points="21.4,12.5 11,30 32,30"/></svg></div>
<div class="cell" style="left:6px;top:553px"><svg width="42" height="42"><polygon fill="#003c82" points="21,6.2 29.5,16 21,40 12.5,16"/></svg></div>
<div class="cell" style="left:50px;top:553px"><svg width="42" height="42"><polygon fill="#003c82" points="37.5,4.9 37.5,40 -3,40"/></svg></div>
<div class="cell" style="left:94px;top:553px"><svg width="42" height="42"><polygon fill="#003c82" points="21.5,5.4 39,40 4,40"/></svg></div>
<div class="cell" style="left:138px;top:553px"><svg width="42" height="42"><polygon fill="#003c82" points="36.6,11.4 36.6,27 6,27"/></svg></div>
<div class="cell" style="left:182px;top:553px"><svg width="42" height="42"><polygon fill="#003c82" points="21,6.2 36.5,16.5 36.5,40 6,40 6,16.5"/></svg></div>
<div class="a" style="left:161px;top:105px;width:182px;height:22px;border:1px solid #767676;background:#fff;font-size:12.3px;letter-spacing:-0.42px;color:#111;line-height:22px;padding-left:6px;white-space:nowrap;z-index:5">Dieses Projekt überschreiben (S)</div>
<div class="a" style="left:265px;top:109px;width:588px;height:460px;background:#f5f4ec;border-top:1px solid #c8c8c8"></div>
<div class="a" style="left:351px;top:135px;width:600px;height:500px;background:#fff;border:1px solid #b4b4b4;border-radius:6px"></div>
<div class="a" style="left:369px;top:189px;width:484px;height:79px;background:#c9c9c9"></div>
<div class="a" style="left:369px;top:277px;width:484px;height:292px;background:#c9c9c9"></div>
<div class="a" style="left:264px;top:445px;width:23px;height:55px;background:#fafafa;border:1px solid #d4d4d4;border-left:none;box-shadow:0 1px 2px rgba(0,0,0,0.15)"></div>
<svg class="a" style="left:264px;top:446px" width="24" height="54"><path d="M15.3,14.7 L4.5,26.2 L15.7,38.1" fill="none" stroke="#2b2b52" stroke-width="1.8"/></svg>
<svg class="a" style="left:369px;top:277px" width="484" height="292"><g transform="translate(-369,-277)"><rect x="398" y="305.5" width="455" height="25.5" fill="#fff"/><rect x="398" y="305.5" width="25" height="264" fill="#fff"/><polygon points="398,334 426,305.5 426,334" fill="#c9c9c9"/><rect x="426.5" y="334.5" width="427" height="240" fill="#fff"/><text x="0" y="0" transform="translate(421.2,327.4) rotate(-45)" font-size="10" fill="#fff" stroke="#fff" stroke-width="0.5" text-anchor="middle" font-family="Liberation Sans">0</text><rect x="425.30" y="299.00" width="1.4" height="6.5" fill="#fff"/><text x="426.70" y="295.2" font-size="17.5" fill="#fff" stroke="#fff" stroke-width="0.4" text-anchor="middle" font-family="Liberation Sans">0</text><rect x="436.70" y="301.00" width="1.1" height="4.5" fill="#fff"/><rect x="447.95" y="301.00" width="1.1" height="4.5" fill="#fff"/><rect x="459.20" y="301.00" width="1.1" height="4.5" fill="#fff"/><rect x="470.45" y="299.00" width="1.1" height="6.5" fill="#fff"/><rect x="481.70" y="301.00" width="1.1" height="4.5" fill="#fff"/><rect x="492.95" y="301.00" width="1.1" height="4.5" fill="#fff"/><rect x="504.20" y="301.00" width="1.1" height="4.5" fill="#fff"/><rect x="515.30" y="299.00" width="1.4" height="6.5" fill="#fff"/><text x="516.70" y="295.2" font-size="17.5" fill="#fff" stroke="#fff" stroke-width="0.4" text-anchor="middle" font-family="Liberation Sans">1</text><rect x="526.70" y="301.00" width="1.1" height="4.5" fill="#fff"/><rect x="537.95" y="301.00" width="1.1" height="4.5" fill="#fff"/><rect x="549.20" y="301.00" width="1.1" height="4.5" fill="#fff"/><rect x="560.45" y="299.00" width="1.1" height="6.5" fill="#fff"/><rect x="571.70" y="301.00" width="1.1" height="4.5" fill="#fff"/><rect x="582.95" y="301.00" width="1.1" height="4.5" fill="#fff"/><rect x="594.20" y="301.00" width="1.1" height="4.5" fill="#fff"/><rect x="605.30" y="299.00" width="1.4" height="6.5" fill="#fff"/><text x="606.70" y="295.2" font-size="17.5" fill="#fff" stroke="#fff" stroke-width="0.4" text-anchor="middle" font-family="Liberation Sans">2</text><rect x="616.70" y="301.00" width="1.1" height="4.5" fill="#fff"/><rect x="627.95" y="301.00" width="1.1" height="4.5" fill="#fff"/><rect x="639.20" y="301.00" width="1.1" height="4.5" fill="#fff"/><rect x="650.45" y="299.00" width="1.1" height="6.5" fill="#fff"/><rect x="661.70" y="301.00" width="1.1" height="4.5" fill="#fff"/><rect x="672.95" y="301.00" width="1.1" height="4.5" fill="#fff"/><rect x="684.20" y="301.00" width="1.1" height="4.5" fill="#fff"/><rect x="695.30" y="299.00" width="1.4" height="6.5" fill="#fff"/><text x="696.70" y="295.2" font-size="17.5" fill="#fff" stroke="#fff" stroke-width="0.4" text-anchor="middle" font-family="Liberation Sans">3</text><rect x="706.70" y="301.00" width="1.1" height="4.5" fill="#fff"/><rect x="717.95" y="301.00" width="1.1" height="4.5" fill="#fff"/><rect x="729.20" y="301.00" width="1.1" height="4.5" fill="#fff"/><rect x="740.45" y="299.00" width="1.1" height="6.5" fill="#fff"/><rect x="751.70" y="301.00" width="1.1" height="4.5" fill="#fff"/><rect x="762.95" y="301.00" width="1.1" height="4.5" fill="#fff"/><rect x="774.20" y="301.00" width="1.1" height="4.5" fill="#fff"/><rect x="785.30" y="299.00" width="1.4" height="6.5" fill="#fff"/><text x="786.70" y="295.2" font-size="17.5" fill="#fff" stroke="#fff" stroke-width="0.4" text-anchor="middle" font-family="Liberation Sans">4</text><rect x="796.70" y="301.00" width="1.1" height="4.5" fill="#fff"/><rect x="807.95" y="301.00" width="1.1" height="4.5" fill="#fff"/><rect x="819.20" y="301.00" width="1.1" height="4.5" fill="#fff"/><rect x="830.45" y="299.00" width="1.1" height="6.5" fill="#fff"/><rect x="841.70" y="301.00" width="1.1" height="4.5" fill="#fff"/><rect x="391.50" y="333.30" width="6.5" height="1.4" fill="#fff"/><text x="0" y="0" transform="translate(387,334.00) rotate(-90)" font-size="17.5" fill="#fff" stroke="#fff" stroke-width="0.4" text-anchor="middle" font-family="Liberation Sans">0</text><rect x="393.50" y="344.70" width="4.5" height="1.1" fill="#fff"/><rect x="393.50" y="355.95" width="4.5" height="1.1" fill="#fff"/><rect x="393.50" y="367.20" width="4.5" height="1.1" fill="#fff"/><rect x="391.50" y="378.45" width="6.5" height="1.1" fill="#fff"/><rect x="393.50" y="389.70" width="4.5" height="1.1" fill="#fff"/><rect x="393.50" y="400.95" width="4.5" height="1.1" fill="#fff"/><rect x="393.50" y="412.20" width="4.5" height="1.1" fill="#fff"/><rect x="391.50" y="423.30" width="6.5" height="1.4" fill="#fff"/><text x="0" y="0" transform="translate(387,424.00) rotate(-90)" font-size="17.5" fill="#fff" stroke="#fff" stroke-width="0.4" text-anchor="middle" font-family="Liberation Sans">1</text><rect x="393.50" y="434.70" width="4.5" height="1.1" fill="#fff"/><rect x="393.50" y="445.95" width="4.5" height="1.1" fill="#fff"/><rect x="393.50" y="457.20" width="4.5" height="1.1" fill="#fff"/><rect x="391.50" y="468.45" width="6.5" height="1.1" fill="#fff"/><rect x="393.50" y="479.70" width="4.5" height="1.1" fill="#fff"/><rect x="393.50" y="490.95" width="4.5" height="1.1" fill="#fff"/><rect x="393.50" y="502.20" width="4.5" height="1.1" fill="#fff"/><rect x="391.50" y="513.30" width="6.5" height="1.4" fill="#fff"/><text x="0" y="0" transform="translate(387,514.00) rotate(-90)" font-size="17.5" fill="#fff" stroke="#fff" stroke-width="0.4" text-anchor="middle" font-family="Liberation Sans">2</text><rect x="393.50" y="524.70" width="4.5" height="1.1" fill="#fff"/><rect x="393.50" y="535.95" width="4.5" height="1.1" fill="#fff"/><rect x="393.50" y="547.20" width="4.5" height="1.1" fill="#fff"/><rect x="391.50" y="558.45" width="6.5" height="1.1" fill="#fff"/><rect x="443.22" y="327" width="1" height="4" fill="#c9c9c9"/><rect x="460.93" y="323.5" width="1" height="7.5" fill="#c9c9c9"/><text x="461.43" y="318.9" font-size="9.6" fill="#c2c2c2" text-anchor="middle" font-family="Liberation Sans">10</text><rect x="478.65" y="327" width="1" height="4" fill="#c9c9c9"/><rect x="496.37" y="323.5" width="1" height="7.5" fill="#c9c9c9"/><text x="496.87" y="318.9" font-size="9.6" fill="#c2c2c2" text-anchor="middle" font-family="Liberation Sans">20</text><rect x="514.08" y="327" width="1" height="4" fill="#c9c9c9"/><rect x="531.80" y="323.5" width="1" height="7.5" fill="#c9c9c9"/><text x="532.30" y="318.9" font-size="9.6" fill="#c2c2c2" text-anchor="middle" font-family="Liberation Sans">30</text><rect x="549.52" y="327" width="1" height="4" fill="#c9c9c9"/><rect x="567.23" y="323.5" width="1" height="7.5" fill="#c9c9c9"/><text x="567.73" y="318.9" font-size="9.6" fill="#c2c2c2" text-anchor="middle" font-family="Liberation Sans">40</text><rect x="584.95" y="327" width="1" height="4" fill="#c9c9c9"/><rect x="602.67" y="323.5" width="1" height="7.5" fill="#c9c9c9"/><text x="603.17" y="318.9" font-size="9.6" fill="#c2c2c2" text-anchor="middle" font-family="Liberation Sans">50</text><rect x="620.38" y="327" width="1" height="4" fill="#c9c9c9"/><rect x="638.10" y="323.5" width="1" height="7.5" fill="#c9c9c9"/><text x="638.60" y="318.9" font-size="9.6" fill="#c2c2c2" text-anchor="middle" font-family="Liberation Sans">60</text><rect x="655.81" y="327" width="1" height="4" fill="#c9c9c9"/><rect x="673.53" y="323.5" width="1" height="7.5" fill="#c9c9c9"/><text x="674.03" y="318.9" font-size="9.6" fill="#c2c2c2" text-anchor="middle" font-family="Liberation Sans">70</text><rect x="691.25" y="327" width="1" height="4" fill="#c9c9c9"/><rect x="708.96" y="323.5" width="1" height="7.5" fill="#c9c9c9"/><text x="709.46" y="318.9" font-size="9.6" fill="#c2c2c2" text-anchor="middle" font-family="Liberation Sans">80</text><rect x="726.68" y="327" width="1" height="4" fill="#c9c9c9"/><rect x="744.40" y="323.5" width="1" height="7.5" fill="#c9c9c9"/><text x="744.90" y="318.9" font-size="9.6" fill="#c2c2c2" text-anchor="middle" font-family="Liberation Sans">90</text><rect x="762.11" y="327" width="1" height="4" fill="#c9c9c9"/><rect x="779.83" y="323.5" width="1" height="7.5" fill="#c9c9c9"/><text x="780.33" y="318.9" font-size="9.6" fill="#c2c2c2" text-anchor="middle" font-family="Liberation Sans">100</text><rect x="797.55" y="327" width="1" height="4" fill="#c9c9c9"/><rect x="815.26" y="323.5" width="1" height="7.5" fill="#c9c9c9"/><text x="815.76" y="318.9" font-size="9.6" fill="#c2c2c2" text-anchor="middle" font-family="Liberation Sans">110</text><rect x="832.98" y="327" width="1" height="4" fill="#c9c9c9"/><rect x="850.70" y="323.5" width="1" height="7.5" fill="#c9c9c9"/><text x="851.20" y="318.9" font-size="9.6" fill="#c2c2c2" text-anchor="middle" font-family="Liberation Sans">120</text><rect x="419" y="351.22" width="4" height="1" fill="#c9c9c9"/><rect x="415.5" y="368.93" width="7.5" height="1" fill="#c9c9c9"/><text x="0" y="0" transform="translate(411.5,369.43) rotate(-90)" font-size="9.6" fill="#c2c2c2" text-anchor="middle" font-family="Liberation Sans">10</text><rect x="419" y="386.65" width="4" height="1" fill="#c9c9c9"/><rect x="415.5" y="404.37" width="7.5" height="1" fill="#c9c9c9"/><text x="0" y="0" transform="translate(411.5,404.87) rotate(-90)" font-size="9.6" fill="#c2c2c2" text-anchor="middle" font-family="Liberation Sans">20</text><rect x="419" y="422.08" width="4" height="1" fill="#c9c9c9"/><rect x="415.5" y="439.80" width="7.5" height="1" fill="#c9c9c9"/><text x="0" y="0" transform="translate(411.5,440.30) rotate(-90)" font-size="9.6" fill="#c2c2c2" text-anchor="middle" font-family="Liberation Sans">30</text><rect x="419" y="457.52" width="4" height="1" fill="#c9c9c9"/><rect x="415.5" y="475.23" width="7.5" height="1" fill="#c9c9c9"/><text x="0" y="0" transform="translate(411.5,475.73) rotate(-90)" font-size="9.6" fill="#c2c2c2" text-anchor="middle" font-family="Liberation Sans">40</text><rect x="419" y="492.95" width="4" height="1" fill="#c9c9c9"/><rect x="415.5" y="510.67" width="7.5" height="1" fill="#c9c9c9"/><text x="0" y="0" transform="translate(411.5,511.17) rotate(-90)" font-size="9.6" fill="#c2c2c2" text-anchor="middle" font-family="Liberation Sans">50</text><rect x="419" y="528.38" width="4" height="1" fill="#c9c9c9"/><rect x="415.5" y="546.10" width="7.5" height="1" fill="#c9c9c9"/><text x="0" y="0" transform="translate(411.5,546.60) rotate(-90)" font-size="9.6" fill="#c2c2c2" text-anchor="middle" font-family="Liberation Sans">60</text><rect x="419" y="563.81" width="4" height="1" fill="#c9c9c9"/><rect x="516" y="341" width="1.5" height="1.5" fill="#b8b8b8"/><rect x="516" y="356" width="1.5" height="1.5" fill="#b8b8b8"/><rect x="516" y="371" width="1.5" height="1.5" fill="#b8b8b8"/><rect x="516" y="386" width="1.5" height="1.5" fill="#b8b8b8"/><rect x="516" y="401" width="1.5" height="1.5" fill="#b8b8b8"/><rect x="516" y="416" width="1.5" height="1.5" fill="#b8b8b8"/><rect x="516" y="431" width="1.5" height="1.5" fill="#b8b8b8"/><rect x="516" y="446" width="1.5" height="1.5" fill="#b8b8b8"/><rect x="516" y="461" width="1.5" height="1.5" fill="#b8b8b8"/><rect x="516" y="476" width="1.5" height="1.5" fill="#b8b8b8"/><rect x="516" y="491" width="1.5" height="1.5" fill="#b8b8b8"/><rect x="516" y="506" width="1.5" height="1.5" fill="#b8b8b8"/><rect x="516" y="521" width="1.5" height="1.5" fill="#b8b8b8"/><rect x="516" y="536" width="1.5" height="1.5" fill="#b8b8b8"/><rect x="516" y="551" width="1.5" height="1.5" fill="#b8b8b8"/><rect x="516" y="566" width="1.5" height="1.5" fill="#b8b8b8"/><rect x="606" y="341" width="1.5" height="1.5" fill="#b8b8b8"/><rect x="606" y="356" width="1.5" height="1.5" fill="#b8b8b8"/><rect x="606" y="371" width="1.5" height="1.5" fill="#b8b8b8"/><rect x="606" y="386" width="1.5" height="1.5" fill="#b8b8b8"/><rect x="606" y="401" width="1.5" height="1.5" fill="#b8b8b8"/><rect x="606" y="416" width="1.5" height="1.5" fill="#b8b8b8"/><rect x="606" y="431" width="1.5" height="1.5" fill="#b8b8b8"/><rect x="606" y="446" width="1.5" height="1.5" fill="#b8b8b8"/><rect x="606" y="461" width="1.5" height="1.5" fill="#b8b8b8"/><rect x="606" y="476" width="1.5" height="1.5" fill="#b8b8b8"/><rect x="606" y="491" width="1.5" height="1.5" fill="#b8b8b8"/><rect x="606" y="506" width="1.5" height="1.5" fill="#b8b8b8"/><rect x="606" y="521" width="1.5" height="1.5" fill="#b8b8b8"/><rect x="606" y="536" width="1.5" height="1.5" fill="#b8b8b8"/><rect x="606" y="551" width="1.5" height="1.5" fill="#b8b8b8"/><rect x="606" y="566" width="1.5" height="1.5" fill="#b8b8b8"/><rect x="696" y="341" width="1.5" height="1.5" fill="#b8b8b8"/><rect x="696" y="356" width="1.5" height="1.5" fill="#b8b8b8"/><rect x="696" y="371" width="1.5" height="1.5" fill="#b8b8b8"/><rect x="696" y="386" width="1.5" height="1.5" fill="#b8b8b8"/><rect x="696" y="401" width="1.5" height="1.5" fill="#b8b8b8"/><rect x="696" y="416" width="1.5" height="1.5" fill="#b8b8b8"/><rect x="696" y="431" width="1.5" height="1.5" fill="#b8b8b8"/><rect x="696" y="446" width="1.5" height="1.5" fill="#b8b8b8"/><rect x="696" y="461" width="1.5" height="1.5" fill="#b8b8b8"/><rect x="696" y="476" width="1.5" height="1.5" fill="#b8b8b8"/><rect x="696" y="491" width="1.5" height="1.5" fill="#b8b8b8"/><rect x="696" y="506" width="1.5" height="1.5" fill="#b8b8b8"/><rect x="696" y="521" width="1.5" height="1.5" fill="#b8b8b8"/><rect x="696" y="536" width="1.5" height="1.5" fill="#b8b8b8"/><rect x="696" y="551" width="1.5" height="1.5" fill="#b8b8b8"/><rect x="696" y="566" width="1.5" height="1.5" fill="#b8b8b8"/><rect x="786" y="341" width="1.5" height="1.5" fill="#b8b8b8"/><rect x="786" y="356" width="1.5" height="1.5" fill="#b8b8b8"/><rect x="786" y="371" width="1.5" height="1.5" fill="#b8b8b8"/><rect x="786" y="386" width="1.5" height="1.5" fill="#b8b8b8"/><rect x="786" y="401" width="1.5" height="1.5" fill="#b8b8b8"/><rect x="786" y="416" width="1.5" height="1.5" fill="#b8b8b8"/><rect x="786" y="431" width="1.5" height="1.5" fill="#b8b8b8"/><rect x="786" y="446" width="1.5" height="1.5" fill="#b8b8b8"/><rect x="786" y="461" width="1.5" height="1.5" fill="#b8b8b8"/><rect x="786" y="476" width="1.5" height="1.5" fill="#b8b8b8"/><rect x="786" y="491" width="1.5" height="1.5" fill="#b8b8b8"/><rect x="786" y="506" width="1.5" height="1.5" fill="#b8b8b8"/><rect x="786" y="521" width="1.5" height="1.5" fill="#b8b8b8"/><rect x="786" y="536" width="1.5" height="1.5" fill="#b8b8b8"/><rect x="786" y="551" width="1.5" height="1.5" fill="#b8b8b8"/><rect x="786" y="566" width="1.5" height="1.5" fill="#b8b8b8"/><rect x="433.5" y="424" width="1.5" height="1.5" fill="#b8b8b8"/><rect x="448.5" y="424" width="1.5" height="1.5" fill="#b8b8b8"/><rect x="463.5" y="424" width="1.5" height="1.5" fill="#b8b8b8"/><rect x="478.5" y="424" width="1.5" height="1.5" fill="#b8b8b8"/><rect x="493.5" y="424" width="1.5" height="1.5" fill="#b8b8b8"/><rect x="508.5" y="424" width="1.5" height="1.5" fill="#b8b8b8"/><rect x="523.5" y="424" width="1.5" height="1.5" fill="#b8b8b8"/><rect x="538.5" y="424" width="1.5" height="1.5" fill="#b8b8b8"/><rect x="553.5" y="424" width="1.5" height="1.5" fill="#b8b8b8"/><rect x="568.5" y="424" width="1.5" height="1.5" fill="#b8b8b8"/><rect x="583.5" y="424" width="1.5" height="1.5" fill="#b8b8b8"/><rect x="598.5" y="424" width="1.5" height="1.5" fill="#b8b8b8"/><rect x="613.5" y="424" width="1.5" height="1.5" fill="#b8b8b8"/><rect x="628.5" y="424" width="1.5" height="1.5" fill="#b8b8b8"/><rect x="643.5" y="424" width="1.5" height="1.5" fill="#b8b8b8"/><rect x="658.5" y="424" width="1.5" height="1.5" fill="#b8b8b8"/><rect x="673.5" y="424" width="1.5" height="1.5" fill="#b8b8b8"/><rect x="688.5" y="424" width="1.5" height="1.5" fill="#b8b8b8"/><rect x="703.5" y="424" width="1.5" height="1.5" fill="#b8b8b8"/><rect x="718.5" y="424" width="1.5" height="1.5" fill="#b8b8b8"/><rect x="733.5" y="424" width="1.5" height="1.5" fill="#b8b8b8"/><rect x="748.5" y="424" width="1.5" height="1.5" fill="#b8b8b8"/><rect x="763.5" y="424" width="1.5" height="1.5" fill="#b8b8b8"/><rect x="778.5" y="424" width="1.5" height="1.5" fill="#b8b8b8"/><rect x="793.5" y="424" width="1.5" height="1.5" fill="#b8b8b8"/><rect x="808.5" y="424" width="1.5" height="1.5" fill="#b8b8b8"/><rect x="823.5" y="424" width="1.5" height="1.5" fill="#b8b8b8"/><rect x="838.5" y="424" width="1.5" height="1.5" fill="#b8b8b8"/><rect x="433.5" y="514" width="1.5" height="1.5" fill="#b8b8b8"/><rect x="448.5" y="514" width="1.5" height="1.5" fill="#b8b8b8"/><rect x="463.5" y="514" width="1.5" height="1.5" fill="#b8b8b8"/><rect x="478.5" y="514" width="1.5" height="1.5" fill="#b8b8b8"/><rect x="493.5" y="514" width="1.5" height="1.5" fill="#b8b8b8"/><rect x="508.5" y="514" width="1.5" height="1.5" fill="#b8b8b8"/><rect x="523.5" y="514" width="1.5" height="1.5" fill="#b8b8b8"/><rect x="538.5" y="514" width="1.5" height="1.5" fill="#b8b8b8"/><rect x="553.5" y="514" width="1.5" height="1.5" fill="#b8b8b8"/><rect x="568.5" y="514" width="1.5" height="1.5" fill="#b8b8b8"/><rect x="583.5" y="514" width="1.5" height="1.5" fill="#b8b8b8"/><rect x="598.5" y="514" width="1.5" height="1.5" fill="#b8b8b8"/><rect x="613.5" y="514" width="1.5" height="1.5" fill="#b8b8b8"/><rect x="628.5" y="514" width="1.5" height="1.5" fill="#b8b8b8"/><rect x="643.5" y="514" width="1.5" height="1.5" fill="#b8b8b8"/><rect x="658.5" y="514" width="1.5" height="1.5" fill="#b8b8b8"/><rect x="673.5" y="514" width="1.5" height="1.5" fill="#b8b8b8"/><rect x="688.5" y="514" width="1.5" height="1.5" fill="#b8b8b8"/><rect x="703.5" y="514" width="1.5" height="1.5" fill="#b8b8b8"/><rect x="718.5" y="514" width="1.5" height="1.5" fill="#b8b8b8"/><rect x="733.5" y="514" width="1.5" height="1.5" fill="#b8b8b8"/><rect x="748.5" y="514" width="1.5" height="1.5" fill="#b8b8b8"/><rect x="763.5" y="514" width="1.5" height="1.5" fill="#b8b8b8"/><rect x="778.5" y="514" width="1.5" height="1.5" fill="#b8b8b8"/><rect x="793.5" y="514" width="1.5" height="1.5" fill="#b8b8b8"/><rect x="808.5" y="514" width="1.5" height="1.5" fill="#b8b8b8"/><rect x="823.5" y="514" width="1.5" height="1.5" fill="#b8b8b8"/><rect x="838.5" y="514" width="1.5" height="1.5" fill="#b8b8b8"/><path d="M436.9,569 V344.9 H853" fill="none" stroke="#ff6a6a" stroke-width="1.5" stroke-dasharray="3 2.5"/><rect x="476.8" y="387.5" width="123.6" height="141.8" fill="none" stroke="#4444e6" stroke-width="1.25" stroke-dasharray="4 5"/><rect x="614.8" y="389.7" width="123.8" height="141.8" fill="none" stroke="#4444e6" stroke-width="1.25" stroke-dasharray="4 5"/><g fill="none" stroke="#000" stroke-width="1.8" stroke-linejoin="round"><path d="M507.20,400.90 C504.93,402.25 497.45,405.70 493.60,409.00 C489.75,412.30 486.42,416.30 484.10,420.70 C481.78,425.10 480.68,428.85 479.70,435.40 C478.72,441.95 478.32,450.90 478.20,460.00 C478.08,469.10 477.85,478.88 479.00,490.00 C480.15,501.12 484.08,520.58 485.10,526.70L485.10,526.70 C492.58,525.30 518.57,520.88 530.00,518.30 C541.43,515.72 545.78,514.23 553.70,511.20 C561.62,508.17 570.90,504.05 577.50,500.10 C584.10,496.15 589.75,492.25 593.30,487.50 C596.85,482.75 598.08,476.87 598.80,471.60 C599.52,466.33 599.02,460.23 597.60,455.90 C596.18,451.57 593.97,448.53 590.30,445.60 C586.63,442.67 580.98,439.52 575.60,438.30 C570.22,437.08 563.02,437.13 558.00,438.30 C552.98,439.47 547.58,444.13 545.50,445.30L545.50,445.30 C545.85,442.92 547.68,435.47 547.60,431.00 C547.52,426.53 546.60,422.17 545.00,418.50 C543.40,414.83 540.67,411.55 538.00,409.00 C535.33,406.45 531.88,404.67 529.00,403.20 C526.12,401.73 522.08,400.70 520.70,400.20 A7.5,7.5 0 1 0 507.2,400.9Z"/><circle cx="513.8" cy="397.3" r="2.3"/><path d="M540.40,448.60 C539.92,446.15 539.43,437.82 537.50,433.90 C535.57,429.98 532.45,427.10 528.80,425.10 C525.15,423.10 520.25,421.65 515.60,421.90 C510.95,422.15 504.82,424.12 500.90,426.60 C496.98,429.08 494.25,432.07 492.10,436.80 C489.95,441.53 488.77,448.63 488.00,455.00 C487.23,461.37 487.27,468.33 487.50,475.00 C487.73,481.67 489.08,491.67 489.40,495.00L489.40,495.00 C490.45,492.18 493.43,484.43 495.70,478.10 C497.97,471.77 500.92,461.93 503.00,457.00 C505.08,452.07 505.37,451.13 508.20,448.50 C511.03,445.87 516.08,442.42 520.00,441.20 C523.92,439.98 528.62,440.40 531.70,441.20 C534.78,442.00 537.05,444.77 538.50,446.00 C539.95,447.23 540.08,448.17 540.40,448.60Z"/><path d="M497.10,499.20 C498.08,496.00 501.48,485.38 503.00,480.00 C504.52,474.62 505.03,470.32 506.20,466.90 C507.37,463.48 507.98,461.70 510.00,459.50 C512.02,457.30 515.97,454.82 518.30,453.70 C520.63,452.58 522.05,452.58 524.00,452.80 C525.95,453.02 528.33,453.63 530.00,455.00 C531.67,456.37 533.17,459.17 534.00,461.00 C534.83,462.83 535.40,463.50 535.00,466.00 C534.60,468.50 532.17,474.33 531.60,476.00L531.60,476.00 C533.08,475.92 538.02,475.17 540.50,475.50 C542.98,475.83 544.95,476.83 546.50,478.00 C548.05,479.17 548.97,480.47 549.80,482.50 C550.63,484.53 551.83,487.45 551.50,490.20 C551.17,492.95 549.55,496.73 547.80,499.00 C546.05,501.27 542.80,502.80 541.00,503.80 C539.20,504.80 537.67,504.80 537.00,505.00Z"/><path d="M542.40,452.80 C544.28,452.38 549.77,449.93 553.70,450.30 C557.63,450.67 562.45,452.63 566.00,455.00 C569.55,457.37 572.95,461.20 575.00,464.50 C577.05,467.80 578.13,471.38 578.30,474.80 C578.47,478.22 577.55,481.80 576.00,485.00 C574.45,488.20 571.52,491.48 569.00,494.00 C566.48,496.52 562.25,499.08 560.90,500.10L560.90,500.10 C561.42,498.00 563.98,490.77 564.00,487.50 C564.02,484.23 562.50,482.67 561.00,480.50 C559.50,478.33 557.27,475.98 555.00,474.50 C552.73,473.02 550.25,471.95 547.40,471.60 C544.55,471.25 539.48,472.27 537.90,472.40L537.90,472.40 C538.50,471.33 540.65,468.23 541.50,466.00 C542.35,463.77 542.85,461.20 543.00,459.00 C543.15,456.80 542.50,453.83 542.40,452.80Z"/><path d="M490.8,506.3 L524.5,511.2 L492.9,517.5Z"/></g><g transform="translate(1215.2,2.2) scale(-1,1)"><g fill="none" stroke="#000" stroke-width="1.8" stroke-linejoin="round"><path d="M507.20,400.90 C504.93,402.25 497.45,405.70 493.60,409.00 C489.75,412.30 486.42,416.30 484.10,420.70 C481.78,425.10 480.68,428.85 479.70,435.40 C478.72,441.95 478.32,450.90 478.20,460.00 C478.08,469.10 477.85,478.88 479.00,490.00 C480.15,501.12 484.08,520.58 485.10,526.70L485.10,526.70 C492.58,525.30 518.57,520.88 530.00,518.30 C541.43,515.72 545.78,514.23 553.70,511.20 C561.62,508.17 570.90,504.05 577.50,500.10 C584.10,496.15 589.75,492.25 593.30,487.50 C596.85,482.75 598.08,476.87 598.80,471.60 C599.52,466.33 599.02,460.23 597.60,455.90 C596.18,451.57 593.97,448.53 590.30,445.60 C586.63,442.67 580.98,439.52 575.60,438.30 C570.22,437.08 563.02,437.13 558.00,438.30 C552.98,439.47 547.58,444.13 545.50,445.30L545.50,445.30 C545.85,442.92 547.68,435.47 547.60,431.00 C547.52,426.53 546.60,422.17 545.00,418.50 C543.40,414.83 540.67,411.55 538.00,409.00 C535.33,406.45 531.88,404.67 529.00,403.20 C526.12,401.73 522.08,400.70 520.70,400.20 A7.5,7.5 0 1 0 507.2,400.9Z"/><circle cx="513.8" cy="397.3" r="2.3"/><path d="M540.40,448.60 C539.92,446.15 539.43,437.82 537.50,433.90 C535.57,429.98 532.45,427.10 528.80,425.10 C525.15,423.10 520.25,421.65 515.60,421.90 C510.95,422.15 504.82,424.12 500.90,426.60 C496.98,429.08 494.25,432.07 492.10,436.80 C489.95,441.53 488.77,448.63 488.00,455.00 C487.23,461.37 487.27,468.33 487.50,475.00 C487.73,481.67 489.08,491.67 489.40,495.00L489.40,495.00 C490.45,492.18 493.43,484.43 495.70,478.10 C497.97,471.77 500.92,461.93 503.00,457.00 C505.08,452.07 505.37,451.13 508.20,448.50 C511.03,445.87 516.08,442.42 520.00,441.20 C523.92,439.98 528.62,440.40 531.70,441.20 C534.78,442.00 537.05,444.77 538.50,446.00 C539.95,447.23 540.08,448.17 540.40,448.60Z"/><path d="M497.10,499.20 C498.08,496.00 501.48,485.38 503.00,480.00 C504.52,474.62 505.03,470.32 506.20,466.90 C507.37,463.48 507.98,461.70 510.00,459.50 C512.02,457.30 515.97,454.82 518.30,453.70 C520.63,452.58 522.05,452.58 524.00,452.80 C525.95,453.02 528.33,453.63 530.00,455.00 C531.67,456.37 533.17,459.17 534.00,461.00 C534.83,462.83 535.40,463.50 535.00,466.00 C534.60,468.50 532.17,474.33 531.60,476.00L531.60,476.00 C533.08,475.92 538.02,475.17 540.50,475.50 C542.98,475.83 544.95,476.83 546.50,478.00 C548.05,479.17 548.97,480.47 549.80,482.50 C550.63,484.53 551.83,487.45 551.50,490.20 C551.17,492.95 549.55,496.73 547.80,499.00 C546.05,501.27 542.80,502.80 541.00,503.80 C539.20,504.80 537.67,504.80 537.00,505.00Z"/><path d="M542.40,452.80 C544.28,452.38 549.77,449.93 553.70,450.30 C557.63,450.67 562.45,452.63 566.00,455.00 C569.55,457.37 572.95,461.20 575.00,464.50 C577.05,467.80 578.13,471.38 578.30,474.80 C578.47,478.22 577.55,481.80 576.00,485.00 C574.45,488.20 571.52,491.48 569.00,494.00 C566.48,496.52 562.25,499.08 560.90,500.10L560.90,500.10 C561.42,498.00 563.98,490.77 564.00,487.50 C564.02,484.23 562.50,482.67 561.00,480.50 C559.50,478.33 557.27,475.98 555.00,474.50 C552.73,473.02 550.25,471.95 547.40,471.60 C544.55,471.25 539.48,472.27 537.90,472.40L537.90,472.40 C538.50,471.33 540.65,468.23 541.50,466.00 C542.35,463.77 542.85,461.20 543.00,459.00 C543.15,456.80 542.50,453.83 542.40,452.80Z"/><path d="M490.8,506.3 L524.5,511.2 L492.9,517.5Z"/></g></g></g></svg>
</body></html>
